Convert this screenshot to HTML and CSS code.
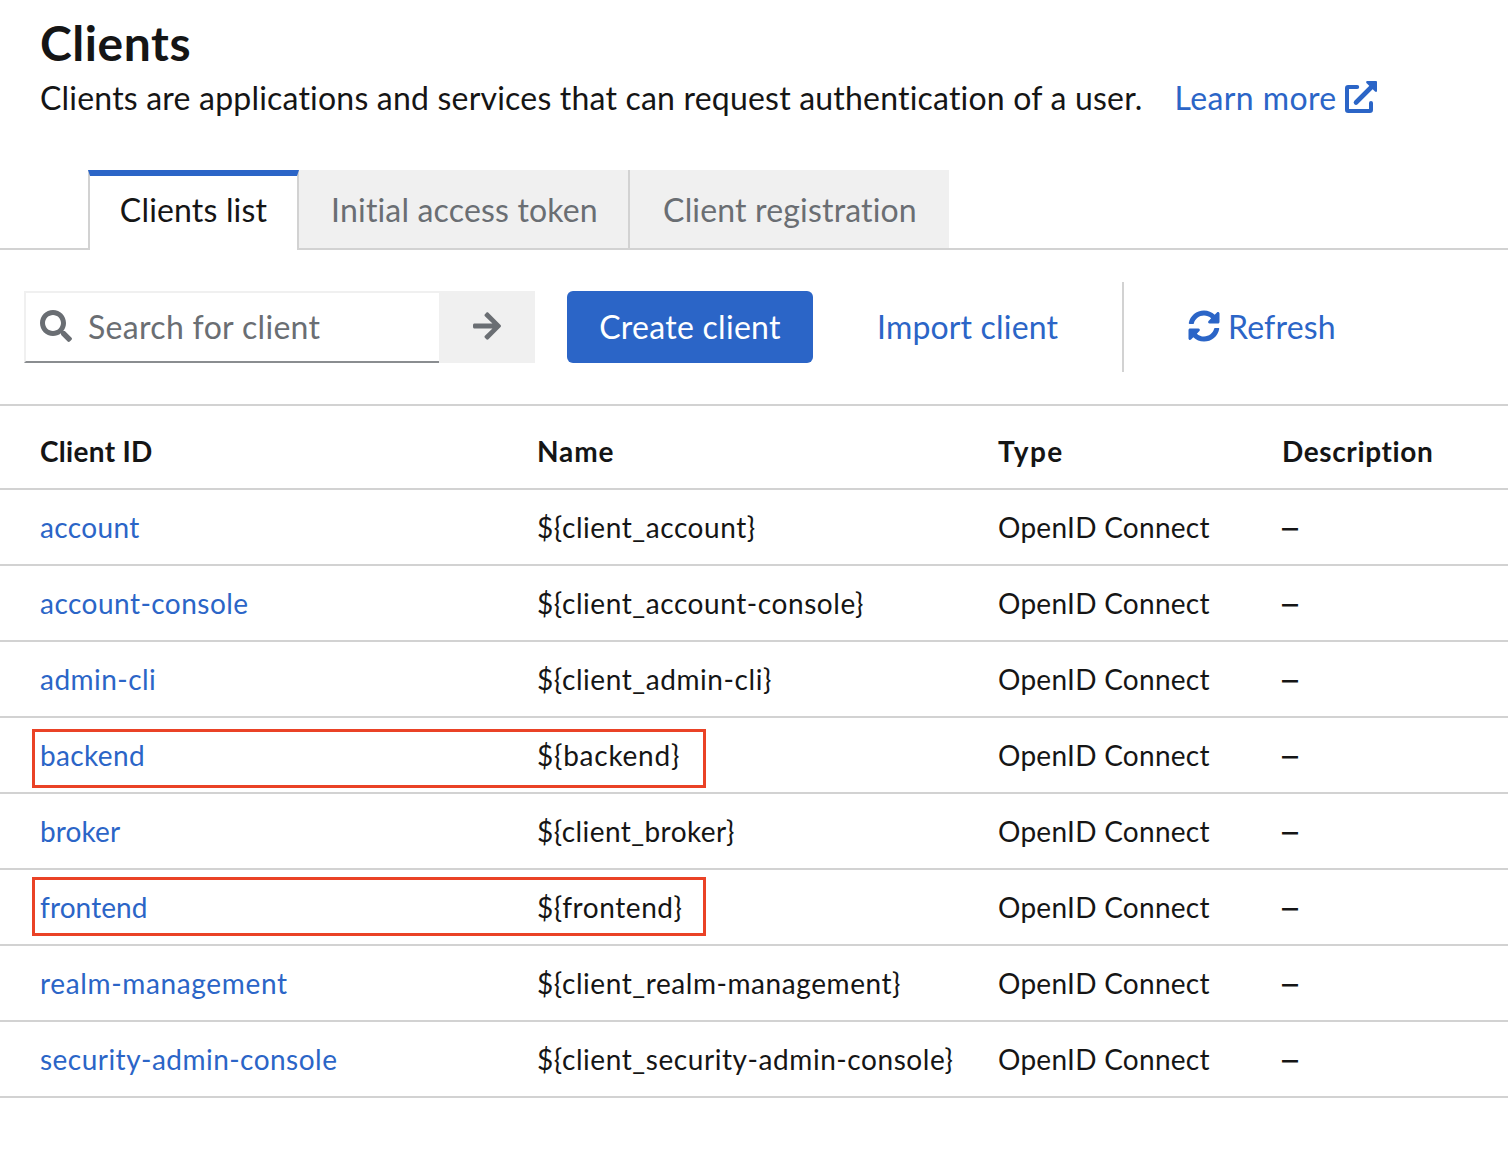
FILE: index.html
```html
<!DOCTYPE html>
<html lang="en">
<head>
<meta charset="utf-8">
<title>Clients</title>
<link rel="stylesheet" href="styles.css">
</head>
<body>
<header class="page-header">
  <h1 class="title">Clients</h1>
  <p class="subtitle">
    <span class="subtitle-text">Clients are applications and services that can request authentication of a user.</span>
    <a class="learn-more" href="#">Learn more<svg class="icon icon-external" viewBox="0 0 32 32"><path d="M12.2 6H3.2Q2 6 2 7.200V28.800Q2 30 3.200 30H24.800Q26 30 26 28.800V22" fill="none" stroke="currentColor" stroke-width="4" stroke-linecap="round"/><path d="M11 21.500L26.500 6" stroke="currentColor" stroke-width="4.600" stroke-linecap="round"/><path d="M22 0H31Q32 0 32 1V10Q31.500 11.800 30 10.600L21.400 2Q20.400.400 22 0Z" fill="currentColor"/></svg></a>
  </p>
</header>

<nav class="tabs">
  <a class="tab tab-current" href="#">Clients list</a>
  <a class="tab tab-token" href="#">Initial access token</a>
  <a class="tab tab-registration" href="#">Client registration</a>
</nav>

<div class="toolbar">
  <div class="search">
    <div class="search-field">
      <svg class="icon" viewBox="0 0 512 512"><path fill="currentColor" d="M505 442.7L405.3 343c-4.500-4.500-10.600-7-17-7H372c27.600-35.300 44-79.700 44-128C416 93.100 322.900 0 208 0S0 93.100 0 208s93.100 208 208 208c48.300 0 92.700-16.400 128-44v16.300c0 6.400 2.500 12.500 7 17l99.700 99.700c9.400 9.400 24.600 9.400 33.900 0l28.300-28.300c9.400-9.400 9.400-24.600.1-34zM208 336c-70.700 0-128-57.200-128-128 0-70.700 57.200-128 128-128 70.700 0 128 57.200 128 128 0 70.700-57.200 128-128 128z"/></svg>
      <span class="placeholder">Search for client</span>
    </div>
    <button class="search-submit" aria-label="Search"><svg class="arrow" viewBox="0 0 448 512"><path fill="currentColor" d="M190.500 66.900l22.200-22.200c9.400-9.400 24.600-9.400 33.900 0L441 239c9.400 9.400 9.400 24.600 0 33.900L246.600 467.300c-9.400 9.400-24.600 9.400-33.900 0l-22.200-22.200c-9.500-9.500-9.300-25 .4-34.300L311.400 296H24c-13.300 0-24-10.700-24-24v-32c0-13.300 10.700-24 24-24h287.400L190.900 101.200c-9.800-9.300-10-24.800-.4-34.300z"/></svg></button>
  </div>
  <button class="button-primary">Create client</button>
  <a class="button-link" href="#">Import client</a>
  <span class="divider"></span>
  <a class="refresh" href="#"><svg class="icon" viewBox="0 0 512 512"><path fill="currentColor" d="M370.720 133.280C339.458 104.008 298.888 87.962 255.848 88c-77.458.068-144.328 53.178-162.791 126.850-1.344 5.363-6.122 9.150-11.651 9.150H24.103c-7.498 0-13.194-6.807-11.807-14.176C33.933 94.924 134.813 8 256 8c66.448 0 126.791 26.136 171.315 68.685L463.030 40.970C478.149 25.851 504 36.559 504 57.941V192c0 13.255-10.745 24-24 24H345.941c-21.382 0-32.090-25.851-16.971-40.971l41.750-41.749zM32 296h134.059c21.382 0 32.090 25.851 16.971 40.971l-41.750 41.750c31.262 29.273 71.835 45.319 114.876 45.280 77.418-.070 144.315-53.144 162.787-126.849 1.344-5.363 6.122-9.150 11.651-9.150h57.304c7.498 0 13.194 6.807 11.807 14.176C478.067 417.076 377.187 504 256 504c-66.448 0-126.791-26.136-171.315-68.685L48.970 471.030C33.851 486.149 8 475.441 8 454.059V320c0-13.255 10.745-24 24-24z"/></svg>Refresh</a>
</div>

<main class="table">
  <div class="row head"><span>Client ID</span><span class="name-head">Name</span><span class="type">Type</span><span class="description">Description</span></div>
  <div class="row"><a href="#">account</a><span class="name">${client_account}</span><span class="protocol">OpenID Connect</span><span class="dash">–</span></div>
  <div class="row"><a class="wide" href="#">account-console</a><span class="name">${client_account-console}</span><span class="protocol">OpenID Connect</span><span class="dash">–</span></div>
  <div class="row"><a class="wide" href="#">admin-cli</a><span class="name">${client_admin-cli}</span><span class="protocol">OpenID Connect</span><span class="dash">–</span></div>
  <div class="row marked"><a href="#">backend</a><span class="name loose">${backend}</span><span class="protocol">OpenID Connect</span><span class="dash">–</span></div>
  <div class="row"><a class="tight" href="#">broker</a><span class="name short">${client_broker}</span><span class="protocol">OpenID Connect</span><span class="dash">–</span></div>
  <div class="row marked marked-high"><a class="tight" href="#">frontend</a><span class="name">${frontend}</span><span class="protocol">OpenID Connect</span><span class="dash">–</span></div>
  <div class="row"><a class="wider" href="#">realm-management</a><span class="name">${client_realm-management}</span><span class="protocol">OpenID Connect</span><span class="dash">–</span></div>
  <div class="row"><a class="wide" href="#">security-admin-console</a><span class="name">${client_security-admin-console}</span><span class="protocol">OpenID Connect</span><span class="dash">–</span></div>
</main>
</body>
</html>
```
FILE: styles.css
```css
*, *::after { box-sizing: border-box; }

body {
  margin: 0;
  background: #fff;
  color: #151515;
  font: 32px/48px Lato, "Liberation Sans", sans-serif;
  letter-spacing: 0.17px;
  white-space: nowrap;
}

a { color: #2b65c7; text-decoration: none; }
button { border: 0; padding: 0; font: inherit; letter-spacing: inherit; }
.icon { width: 32px; height: 32px; flex: none; }

.page-header { height: 170px; padding: 12px 40px 0; }
.title {
  margin: 0;
  font-size: 48px;
  line-height: 62px;
  font-weight: 700;
  letter-spacing: 0.55px;
}
.subtitle { display: flex; gap: 32px; margin: 0; letter-spacing: 0.2px; }
.learn-more { display: flex; align-items: center; gap: 8px; letter-spacing: 0.4px; }
.icon-external { margin-bottom: 2px; }

.tabs {
  display: flex;
  height: 80px;
  padding-left: 88px;
  box-shadow: inset 0 -2px #d2d2d2;
}
.tab {
  display: flex;
  align-items: center;
  justify-content: center;
  height: 78px;
  padding-top: 2px;
  background: #f0f0f0;
  color: #6a6e73;
}
.tab-current {
  width: 211px;
  height: 80px;
  padding-top: 0;
  padding-bottom: 6px;
  border: 2px solid #d2d2d2;
  border-top: 6px solid #2b65c7;
  border-bottom: 0;
  background: #fff;
  color: #151515;
}
.tab-token { width: 331px; padding-left: 2px; border-right: 2px solid #d2d2d2; }
.tab-registration { width: 319px; padding-left: 1px; }

.toolbar {
  display: flex;
  align-items: center;
  height: 156px;
  padding: 0 24px;
  border-bottom: 2px solid #d2d2d2;
}
.search { display: flex; width: 511px; height: 72px; margin-right: 32px; }
.search-field {
  display: flex;
  align-items: center;
  gap: 16px;
  width: 415px;
  padding: 0 14px 2px;
  border: 2px solid #f0f0f0;
  border-right: 0;
  border-bottom-color: #8a8d90;
  color: #6a6e73;
}
.placeholder { padding-top: 1px; letter-spacing: 0.32px; }
.search-submit {
  display: flex;
  align-items: center;
  justify-content: center;
  width: 96px;
  padding-bottom: 2px;
  background: #f0f0f0;
  color: #6a6e73;
}
.arrow { width: 28px; height: 32px; }
.button-primary {
  width: 246px;
  height: 72px;
  margin-right: 64px;
  border-radius: 6px;
  background: #2b65c7;
  color: #fff;
  letter-spacing: 0.28px;
}
.button-link { width: 181px; margin-right: 64px; }
.divider { width: 2px; height: 90px; margin-right: 64px; background: #d2d2d2; }
.refresh { display: flex; align-items: center; gap: 8px; }
.refresh .icon { margin-bottom: 2px; }

.table { font-size: 28px; line-height: 42px; }
.row {
  position: relative;
  display: grid;
  grid-template-columns: 497px 461px 284px 1fr;
  align-items: center;
  height: 76px;
  padding-left: 40px;
  border-bottom: 2px solid #d2d2d2;
}
.row a { letter-spacing: 0.35px; }
.row .wide { letter-spacing: 0.47px; }
.row .wider { letter-spacing: 0.65px; }
.row .tight { letter-spacing: 0.1px; }
.name { letter-spacing: 0.57px; }
.short { letter-spacing: 0.43px; }
.loose { letter-spacing: 0.75px; }
.protocol { letter-spacing: 0.27px; }
.head { height: 84px; padding-top: 8px; font-weight: 700; letter-spacing: 0.3px; }
.name-head { letter-spacing: 0.9px; }
.type { letter-spacing: 1.4px; }
.description { letter-spacing: 0.62px; }
.dash { padding-top: 1px; font-family: Inter, sans-serif; font-size: 32px; }

/* Highlight frame laid over the ID and name cells */
.marked::after {
  content: "";
  position: absolute;
  left: 32px;
  top: 11px;
  width: 674px;
  height: 59px;
  border: 3px solid #ea4226;
}
.marked-high::after { top: 7px; }
```
